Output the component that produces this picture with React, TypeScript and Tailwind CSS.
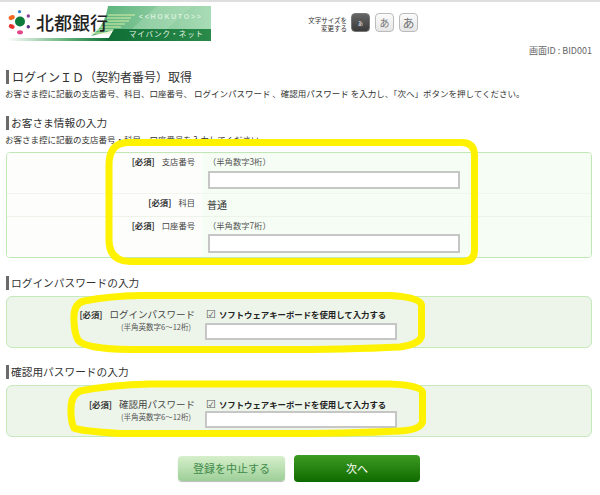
import React from 'react';

const Heading = ({ title, big }: { title: string; big?: boolean }) => (
    <h2 className={`h-[14px] border-l-[3px] border-[#6a6a6a] leading-[14px] font-normal text-[#333] whitespace-nowrap ${big ? 'text-[12px] pl-[3px]' : 'text-[10.7px] pl-[2px]'}`}>
        {title}
    </h2>
);

const Required = () => <span className="font-bold text-[8.4px] text-[#333]">[必須]</span>;

const TextInput = ({ className }: { className: string }) => (
    <input type="text" className={`block bg-white border-2 border-[#c6c6c6] outline-none ${className}`} />
);

const Logo = () => (
    <div className="relative w-[204px] h-[35px] overflow-hidden">
        <svg className="absolute inset-0" width="204" height="35" viewBox="0 0 204 35">
            <defs>
                <linearGradient id="banner" x1="0" y1="0" x2="1" y2="0">
                    <stop offset="0" stopColor="#4fae72" />
                    <stop offset="0.5" stopColor="#84c79a" />
                    <stop offset="1" stopColor="#a9dcb6" />
                </linearGradient>
                <linearGradient id="band" x1="0" y1="0" x2="1" y2="0">
                    <stop offset="0" stopColor="#ffffff" />
                    <stop offset="0.6" stopColor="#5fae74" />
                    <stop offset="1" stopColor="#0f6e35" />
                </linearGradient>
                <linearGradient id="dark" x1="0" y1="0" x2="1" y2="0">
                    <stop offset="0" stopColor="#0f6e35" />
                    <stop offset="1" stopColor="#2a8a4a" />
                </linearGradient>
            </defs>
            <path d="M101 0H204V24H108L84 30Q98 20 101 0Z" fill="url(#banner)" />
            <path d="M150 0H185L160 23H125Z" fill="#b6e2c0" opacity="0.35" />
            <path d="M101 9H128M100 12H124M99 15H122M96 18H118M92 21H114M88 24H108M84 27H104" stroke="#dcefa8" strokeWidth="1" />
            <path d="M107 23H204V35H100Z" fill="url(#dark)" />
            <rect x="0" y="32" width="103" height="3" fill="url(#band)" />
            <circle cx="13" cy="15.5" r="5" fill="#0c7a3a" />
            <ellipse cx="4.7" cy="11.5" rx="3.2" ry="2.2" fill="#f0681f" transform="rotate(-25 4.7 11.5)" />
            <ellipse cx="4.7" cy="20.5" rx="3" ry="2.2" fill="#e8352c" transform="rotate(25 4.7 20.5)" />
            <circle cx="12.5" cy="5.7" r="1.6" fill="#2f7fc4" />
            <circle cx="21.3" cy="10" r="1.7" fill="#8a3fa0" />
            <circle cx="21.3" cy="20.7" r="1.7" fill="#5b2d86" />
            <ellipse cx="13" cy="26.3" rx="3" ry="2.1" fill="#e0488a" />
        </svg>
        <span className="absolute left-[29px] top-[2px] text-[18px] leading-[28px] font-medium text-[#222]">北都銀行</span>
        <span className="absolute left-[132px] top-[6px] text-[7px] leading-[10px] font-bold text-[#d8f0dc] tracking-[1.7px] font-['Liberation_Sans',sans-serif]">{'<<HOKUTO>>'}</span>
        <span className="absolute left-[122px] top-[23px] text-[7.5px] leading-[10px] text-[#e6f5e6] tracking-[0.8px] whitespace-nowrap">マイバンク・ネット</span>
    </div>
);

const SizeButton = ({ size, dark }: { size: string; dark?: boolean }) => (
    <button className={`w-[19px] h-[19px] rounded-[4px] border flex items-center justify-center leading-none ${size} ${dark ? 'border-[#777] bg-gradient-to-b from-[#666] to-[#3a3a3a] text-white' : 'border-[#bbb] bg-gradient-to-b from-[#fbfbfb] to-[#e6e6e6] text-[#777]'}`}>
        あ
    </button>
);

const PasswordRow = ({ label, top, inputGap }: { label: string; top: string; inputGap: string }) => (
    <div className={`flex h-full ${top}`}>
        <div className="w-[188px] text-right">
            <div className="flex justify-end items-center gap-[7px] h-[13px]">
                <Required />
                <span className="text-[9.5px] text-[#444] whitespace-nowrap">{label}</span>
            </div>
            <p className="text-[7.5px] leading-[11px] text-[#555] pr-[4px] whitespace-nowrap">(半角英数字6～12桁)</p>
        </div>
        <div className="ml-[10px]">
            <div className="flex items-center h-[13px] pl-[1px] whitespace-nowrap">
                <span className="w-[13px] text-[11px] leading-none text-[#555] font-['DejaVu_Sans',sans-serif]">☑</span>
                <span className="text-[8.4px] font-bold text-[#222]">ソフトウェアキーボードを使用して入力する</span>
            </div>
            <TextInput className={`w-[192px] h-[17px] ${inputGap}`} />
        </div>
    </div>
);

const App: React.FC = () => {
    return (
        <div className="relative w-[600px] h-[495px] overflow-hidden bg-white font-['Noto_Sans_CJK_JP',sans-serif]">
            <div className="h-[2px] bg-[#dedede]" />

            {/* Header */}
            <div className="relative flex mt-[4px] ml-[7px] h-[35px]">
                <Logo />
                <div className="flex items-start ml-[96px] pt-[7px]">
                    <p className="w-[40px] text-right text-[6.5px] leading-[8px] text-[#333] mt-[3px] whitespace-nowrap">文字サイズを<br />変更する</p>
                    <div className="flex gap-[5px] ml-[4px]">
                        <SizeButton size="text-[5px]" dark />
                        <SizeButton size="text-[10px]" />
                        <SizeButton size="text-[12px]" />
                    </div>
                </div>
            </div>

            <div className="px-[6px] w-[598px]">
                <p className="mt-[5px] h-[10px] text-right text-[9px] leading-[10px] text-[#666]">画面ID : BID001</p>

                <div className="mt-[14px]">
                    <Heading title="ログインＩＤ（契約者番号）取得" big />
                </div>
                <p className="mt-[4px] -ml-px h-[10px] text-[8.5px] leading-[10px] text-[#333] whitespace-nowrap">
                    お客さま控に記載の支店番号、科目、口座番号、 ログインパスワード 、確認用パスワード を入力し、「次へ」ボタンを押してください。
                </p>

                <div className="mt-[18px]">
                    <Heading title="お客さま情報の入力" />
                </div>
                <p className="mt-[4px] -ml-px h-[10px] text-[8.5px] leading-[10px] text-[#333] whitespace-nowrap">
                    お客さま控に記載の支店番号・科目・口座番号を入力してください。
                </p>

                {/* Customer info */}
                <div className="mt-[8px] h-[106px] border border-[#bfe8b4] rounded-[4px] overflow-hidden text-[8.3px] text-[#444]">
                    <div className="grid grid-cols-[195px_1fr] h-[40px]">
                        <div className="flex justify-end gap-[7px] pr-[7px] pt-[2px] bg-[#fdfefc]"><Required /><span>支店番号</span></div>
                        <div className="bg-[#f6fdf4] pl-[6px] pt-[2px]">
                            <p className="leading-[12px] text-[#555]">（半角数字3桁）</p>
                            <TextInput className="w-[252px] h-[18px] mt-[4px]" />
                        </div>
                    </div>
                    <div className="grid grid-cols-[195px_1fr] h-[23px] border-t border-[#f1f5ee]">
                        <div className="flex justify-end gap-[7px] pr-[7px] pt-[2px] bg-[#fdfefc]"><Required /><span>科目</span></div>
                        <div className="bg-[#f6fdf4] pl-[5px] pt-[4px] text-[10px] leading-[14px] text-[#333]">普通</div>
                    </div>
                    <div className="grid grid-cols-[195px_1fr] h-[41px] border-t border-[#eef3ea]">
                        <div className="flex justify-end gap-[7px] pr-[7px] pt-[2px] bg-[#fdfefc]"><Required /><span>口座番号</span></div>
                        <div className="bg-[#f6fdf4] pl-[6px] pt-[2px]">
                            <p className="leading-[12px] text-[#555]">（半角数字7桁）</p>
                            <TextInput className="w-[252px] h-[19px] mt-[3px]" />
                        </div>
                    </div>
                </div>

                <div className="mt-[18px]">
                    <Heading title="ログインパスワードの入力" />
                </div>
                <div className="mt-[6px] h-[52px] border border-[#c5e9bb] rounded-[6px] bg-[#edf4ea]">
                    <PasswordRow label="ログインパスワード" top="pt-[11px]" inputGap="mt-[2px]" />
                </div>

                <div className="mt-[17px]">
                    <Heading title="確認用パスワードの入力" />
                </div>
                <div className="mt-[6px] h-[52px] border border-[#c5e9bb] rounded-[6px] bg-[#edf4ea]">
                    <PasswordRow label="確認用パスワード" top="pt-[12px]" inputGap="mt-0" />
                </div>

                {/* Actions */}
                <div className="flex items-center mt-[18px] ml-[172px] gap-[9px] h-[27px]">
                    <button className="w-[107px] h-[25px] rounded-[4px] bg-gradient-to-b from-[#d6efcb] to-[#9dcf98] text-[11px] text-[#3f8a4a] shadow-[0_1px_1px_#bbb]">登録を中止する</button>
                    <button className="w-[126px] h-[27px] rounded-[4px] bg-gradient-to-b from-[#3d9c22] to-[#0d6a00] text-[11px] text-white">次へ</button>
                </div>
            </div>

            {/* Hand-drawn yellow marks */}
            <svg className="absolute inset-0 pointer-events-none" width="600" height="495" viewBox="0 0 600 495" fill="none" stroke="#fff200" strokeWidth="7">
                <path d="M128 142.5H462Q474.5 142.5 474.5 156V250Q474.5 261.5 462 261.5H130Q109 261 109 240V165Q109 143 128 142.5Z" />
                <path d="M74 320Q73 304 84 301Q110 296 140 295.5H390Q420 297 421.5 305V336Q420 344 400 347Q340 350 250 349.5H130Q85 349 78 340Q74 332 74 320Z" />
                <path d="M71 412Q70 396 80 391Q110 385 150 384H390Q420 385 422.5 392V422Q420 430 400 431Q340 434 250 433.5H120Q80 431 74 428Q71 422 71 412Z" />
            </svg>
        </div>
    );
};

export default App;
